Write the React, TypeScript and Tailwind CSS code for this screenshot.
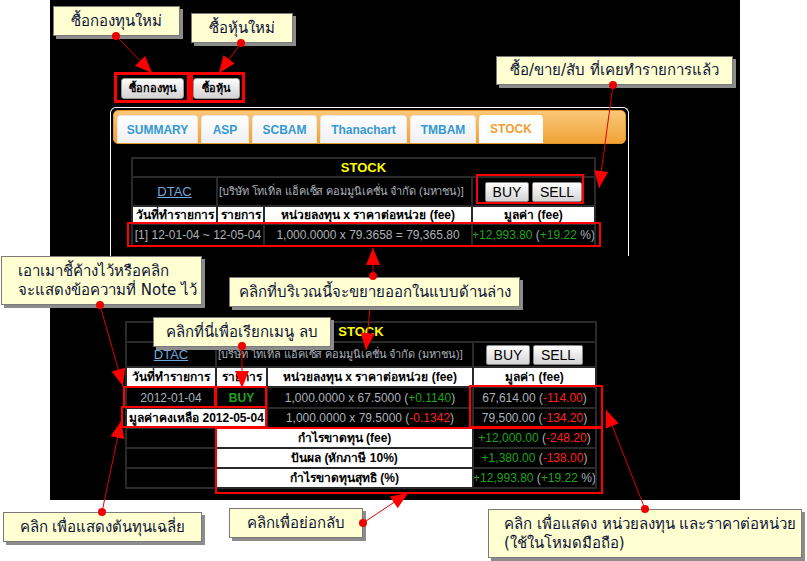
import React from "react";

const GRAY = "text-[#a9b1b9]";
const SANS = "font-['Liberation_Sans',Arial,sans-serif]";

function G({ children }: { children: React.ReactNode }) {
  return <span className="text-[#1fa31f]">{children}</span>;
}
function R({ children }: { children: React.ReactNode }) {
  return <span className="text-[#ff2020]">{children}</span>;
}

function Cell({
  children,
  className = "",
}: {
  children?: React.ReactNode;
  className?: string;
}) {
  return (
    <div
      className={
        "flex items-center justify-center whitespace-nowrap overflow-hidden bg-black " +
        className
      }
    >
      {children}
    </div>
  );
}

function Head({
  children,
  className = "",
}: {
  children: React.ReactNode;
  className?: string;
}) {
  return (
    <Cell className={"bg-white text-black font-bold " + className}>
      {children}
    </Cell>
  );
}

function BuySell() {
  return (
    <div className="flex gap-[3px]">
      <button className="h-[20px] w-[44px] rounded-[2px] border border-[#8a8a8a] bg-gradient-to-b from-white to-[#d4d4d4] text-[14px] text-black leading-none">
        BUY
      </button>
      <button className="h-[20px] w-[50px] rounded-[2px] border border-[#8a8a8a] bg-gradient-to-b from-white to-[#d4d4d4] text-[14px] text-black leading-none">
        SELL
      </button>
    </div>
  );
}

const COMPANY = "[บริษัท โทเทิ่ล แอ็คเซ็ส คอมมูนิเคชั่น จำกัด (มหาชน)]";

function Company() {
  return (
    <Cell
      className={
        "col-span-2 justify-start pl-[1px] text-[11px] tracking-[-0.1px] " + GRAY
      }
    >
      {COMPANY}
    </Cell>
  );
}

function Table1() {
  return (
    <div
      className={
        "ml-[18px] mt-[13px] w-[465px] bg-[#2a2a2a] p-[2px] grid grid-cols-[83px_45px_206px_121px] grid-rows-[17px_27px_16px_20px] gap-[2px] text-[12px] " +
        SANS
      }
    >
      <Cell className="col-span-4 bg-[#008000] text-[#ffff00] font-bold text-[13px]">
        STOCK
      </Cell>
      <Cell className="text-[#6fa8dc] underline text-[13px]">DTAC</Cell>
      <Company />
      <Cell>
        <BuySell />
      </Cell>
      <Head>วันที่ทำรายการ</Head>
      <Head>รายการ</Head>
      <Head>หน่วยลงทุน x ราคาต่อหน่วย (fee)</Head>
      <Head>มูลค่า (fee)</Head>
      <Cell className={"col-span-2 " + GRAY}>[1] 12-01-04 ~ 12-05-04</Cell>
      <Cell className={GRAY}>1,000.0000 x 79.3658 = 79,365.80</Cell>
      <Cell className={GRAY}>
        <G>+12,993.80</G>&nbsp;(<G>+19.22</G>&nbsp;%)
      </Cell>
    </div>
  );
}

function Table2() {
  return (
    <div
      className={
        "ml-[75px] mt-[65px] w-[472px] bg-[#2a2a2a] p-[2px] grid grid-cols-[88px_49px_204px_121px] grid-rows-[18px_23px_18px_19px_18px_18px_18px_18px] gap-[2px] text-[12px] " +
        SANS
      }
    >
      <Cell className="col-span-4 bg-[#008000] text-[#ffff00] font-bold text-[13px]">
        STOCK
      </Cell>
      <Cell className="text-[#6fa8dc] underline text-[13px]">DTAC</Cell>
      <Company />
      <Cell>
        <BuySell />
      </Cell>
      <Head>วันที่ทำรายการ</Head>
      <Head>รายการ</Head>
      <Head>หน่วยลงทุน x ราคาต่อหน่วย (fee)</Head>
      <Head>มูลค่า (fee)</Head>

      <Cell className={GRAY}>2012-01-04</Cell>
      <Cell className="text-[#1fa31f] font-bold">BUY</Cell>
      <Cell className={GRAY}>
        1,000.0000 x 67.5000 (<G>+0.1140</G>)
      </Cell>
      <Cell className={GRAY}>
        67,614.00 (<R>-114.00</R>)
      </Cell>

      <Head className="col-span-2">มูลค่าคงเหลือ 2012-05-04</Head>
      <Cell className={GRAY}>
        1,000.0000 x 79.5000 (<R>-0.1342</R>)
      </Cell>
      <Cell className={GRAY}>
        79,500.00 (<R>-134.20</R>)
      </Cell>

      <Cell />
      <Head className="col-span-2">กำไรขาดทุน (fee)</Head>
      <Cell className={GRAY}>
        <G>+12,000.00</G>&nbsp;(<R>-248.20</R>)
      </Cell>

      <Cell />
      <Head className="col-span-2">ปันผล (หักภาษี 10%)</Head>
      <Cell className={GRAY}>
        <G>+1,380.00</G>&nbsp;(<R>-138.00</R>)
      </Cell>

      <Cell />
      <Head className="col-span-2">กำไรขาดทุนสุทธิ (%)</Head>
      <Cell className={GRAY}>
        <G>+12,993.80</G>&nbsp;(<G>+19.22</G>&nbsp;%)
      </Cell>
    </div>
  );
}

const TABS = [
  { label: "SUMMARY", w: "w-[81px]" },
  { label: "ASP", w: "w-[48px]" },
  { label: "SCBAM", w: "w-[65px]" },
  { label: "Thanachart", w: "w-[87px]" },
  { label: "TMBAM", w: "w-[66px]" },
];

function Panel() {
  return (
    <div className="ml-[60px] mt-[8px] h-[149px] w-[519px] rounded-t-[6px] border border-b-0 border-white px-[2px] pt-[2px]">
      <div
        className={
          "flex h-[34px] gap-[3px] rounded-[5px] border border-[#e0962a] bg-gradient-to-b from-[#f9c877] to-[#f1a233] pl-[3px] pt-[4px] " +
          SANS
        }
      >
        {TABS.map((t) => (
          <div
            key={t.label}
            className={
              "flex items-center justify-center rounded-t-[4px] border border-b-0 border-[#e6e6e6] bg-gradient-to-b from-white to-[#efefef] text-[12px] font-bold text-[#3399d4] " +
              t.w
            }
          >
            {t.label}
          </div>
        ))}
        <div className="flex w-[64px] items-center justify-center rounded-t-[4px] bg-white text-[12px] font-bold text-[#f0a030]">
          STOCK
        </div>
      </div>
      <Table1 />
    </div>
  );
}

function Callout({
  className,
  children,
}: {
  className: string;
  children: React.ReactNode;
}) {
  return (
    <div
      className={
        "absolute flex items-center border border-[#7a7a7a] bg-[#ffffd2] text-[15px] leading-[19px] text-[#0c1436] shadow-[3px_3px_0_#8c8c8c] " +
        className
      }
    >
      {children}
    </div>
  );
}

function Box({ className }: { className: string }) {
  return <div className={"absolute border-[#ff0000] " + className} />;
}

type Arrow = [number, number, number, number];
const ARROWS: Arrow[] = [
  [116, 36, 152, 73],
  [241, 43, 219, 73],
  [613, 85, 599, 188],
  [100, 305, 123, 386],
  [373, 276, 373, 248],
  [373, 276, 366, 350],
  [242, 346, 242, 388],
  [102, 512, 121, 421],
  [363, 523, 408, 493],
  [645, 509, 606, 410],
];

function head([x1, y1, x2, y2]: Arrow) {
  const dx = x2 - x1;
  const dy = y2 - y1;
  const len = Math.hypot(dx, dy);
  const ux = dx / len;
  const uy = dy / len;
  const bx = x2 - ux * 17;
  const by = y2 - uy * 17;
  const px = -uy * 7;
  const py = ux * 7;
  return `${x2},${y2} ${bx + px},${by + py} ${bx - px},${by - py}`;
}

export default function App() {
  return (
    <div
      className="relative h-[561px] w-[807px] overflow-hidden bg-white"
      style={{ fontFamily: "Tahoma, 'DejaVu Sans', 'Noto Sans', sans-serif" }}
    >
      <div className="ml-[50px] h-[500px] w-[690px] bg-black pt-[78px]">
        <div className="ml-[71px] flex gap-[9px]">
          <button className="h-[21px] w-[63px] rounded-[3px] border border-[#9a9a9a] bg-gradient-to-b from-[#fdfdfd] to-[#d2d2d2] text-[11px] font-bold leading-none text-black">
            ซื้อกองทุน
          </button>
          <button className="h-[21px] w-[47px] rounded-[3px] border border-[#9a9a9a] bg-gradient-to-b from-[#fdfdfd] to-[#d2d2d2] text-[11px] font-bold leading-none text-black">
            ซื้อหุ้น
          </button>
        </div>
        <Panel />
        <Table2 />
      </div>

      {/* red highlight boxes */}
      <Box className="left-[114px] top-[72px] h-[31px] w-[76px] border-[3px]" />
      <Box className="left-[190px] top-[72px] h-[31px] w-[55px] border-[3px]" />
      <Box className="left-[476px] top-[174px] h-[30px] w-[108px] border-[2px]" />
      <Box className="left-[127px] top-[222px] h-[25px] w-[474px] border-[2px]" />
      <Box className="left-[123px] top-[386px] h-[22px] w-[93px] border-[2px]" />
      <Box className="left-[215px] top-[386px] h-[22px] w-[52px] border-[2px]" />
      <Box className="left-[121px] top-[406px] h-[22px] w-[146px] border-[2px]" />
      <Box className="left-[469px] top-[385px] h-[43px] w-[134px] border-[2px]" />
      <Box className="left-[215px] top-[427px] h-[67px] w-[388px] border-[2px]" />

      <svg
        className="pointer-events-none absolute left-0 top-0"
        width={807}
        height={561}
      >
        {ARROWS.map((a, i) => (
          <g key={i}>
            <line
              x1={a[0]}
              y1={a[1]}
              x2={a[2]}
              y2={a[3]}
              stroke="#e00000"
              strokeWidth={1}
            />
            <polygon points={head(a)} fill="#ff0000" />
          </g>
        ))}
      </svg>

      <Callout className="left-[53px] top-[6px] h-[30px] w-[127px] justify-center">
        ซื้อกองทุนใหม่
      </Callout>
      <Callout className="left-[191px] top-[13px] h-[30px] w-[102px] justify-center">
        ซื้อหุ้นใหม่
      </Callout>
      <Callout className="left-[496px] top-[56px] h-[29px] w-[237px] justify-center">
        ซื้อ/ขาย/สับ ที่เคยทำรายการแล้ว
      </Callout>
      <Callout className="left-[1px] top-[256px] h-[49px] w-[201px] pl-[16px]">
        <div>
          เอาเมาชี้ค้างไว้หรือคลิก
          <br />
          จะแสดงข้อความที่ Note ไว้
        </div>
      </Callout>
      <Callout className="left-[229px] top-[277px] h-[30px] w-[291px] justify-center">
        คลิกที่บริเวณนี้จะขยายออกในแบบด้านล่าง
      </Callout>
      <Callout className="left-[153px] top-[317px] h-[30px] w-[178px] justify-center">
        คลิกที่นี่เพื่อเรียกเมนู ลบ
      </Callout>
      <Callout className="left-[3px] top-[512px] h-[30px] w-[199px] justify-center">
        คลิก เพื่อแสดงต้นทุนเฉลี่ย
      </Callout>
      <Callout className="left-[229px] top-[508px] h-[30px] w-[134px] justify-center">
        คลิกเพื่อย่อกลับ
      </Callout>
      <Callout className="left-[488px] top-[509px] h-[49px] w-[314px] pl-[15px]">
        <div>
          คลิก เพื่อแสดง หน่วยลงทุน และราคาต่อหน่วย
          <br />
          (ใช้ในโหมดมือถือ)
        </div>
      </Callout>

      <svg
        className="pointer-events-none absolute left-0 top-0"
        width={807}
        height={561}
      >
        {[
          [116, 36],
          [241, 43],
          [613, 85],
          [100, 305],
          [373, 276],
          [242, 346],
          [102, 512],
          [363, 523],
          [645, 509],
        ].map(([x, y], i) => (
          <circle key={i} cx={x} cy={y} r={4} fill="#ee0000" />
        ))}
      </svg>
    </div>
  );
}
